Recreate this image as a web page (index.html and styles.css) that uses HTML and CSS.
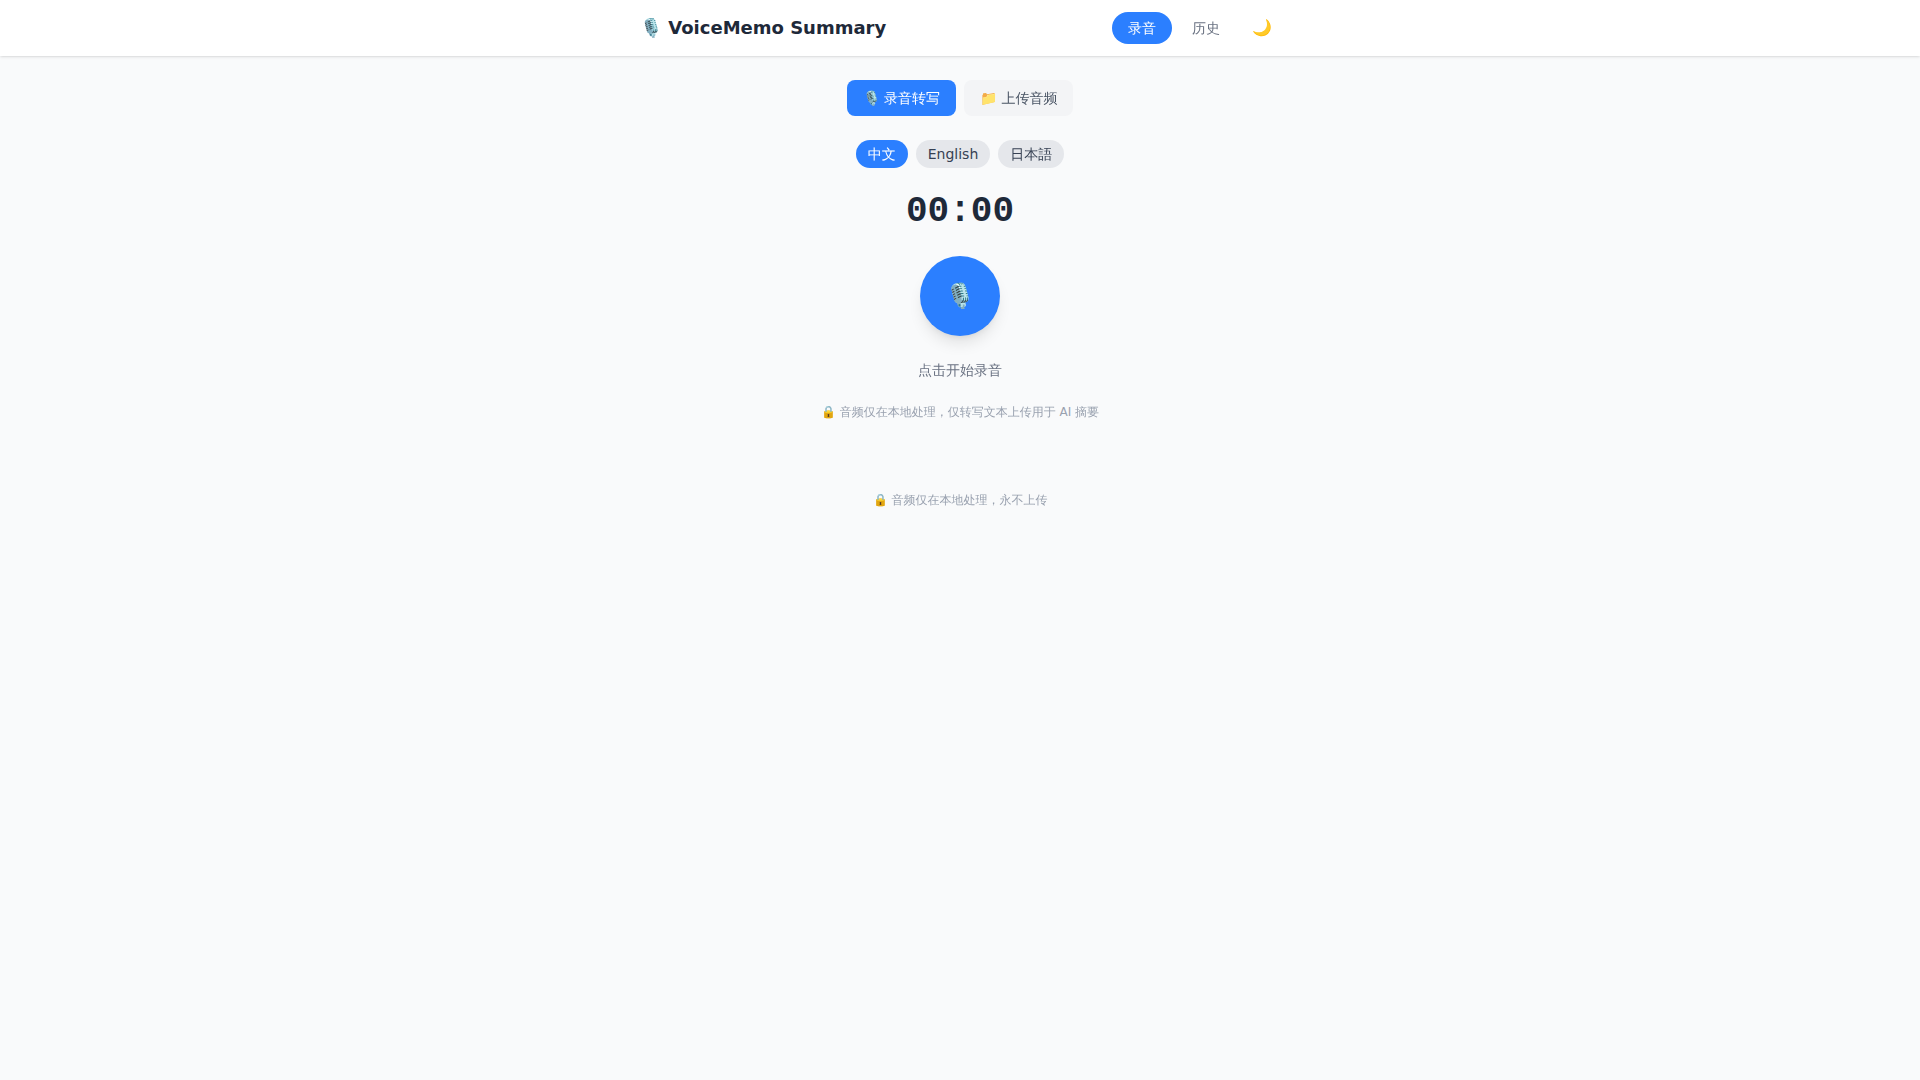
FILE: index.html
```html
<!DOCTYPE html>
<html lang="zh-CN">
<head>
	<meta charset="UTF-8">
	<meta name="viewport" content="width=device-width, initial-scale=1.0">
	<title>VoiceMemo Summary</title>

	<link rel="stylesheet" href="styles.css">
</head>
<body>
	<header class="header">
		<div class="header__inner">
			<h1 class="header__title">🎙️ VoiceMemo Summary</h1>
			<nav class="nav">
				<button class="nav__button nav__button--active" type="button">录音</button>
				<button class="nav__button" type="button">历史</button>
				<button class="nav__theme" type="button" aria-label="深色模式">🌙</button>
			</nav>
		</div>
	</header>

	<main class="main">
		<div class="modes">
			<button class="mode mode--active" type="button">🎙️ 录音转写</button>
			<button class="mode" type="button">📁 上传音频</button>
		</div>

		<section class="recorder">
			<div class="langs">
				<button class="lang lang--active" type="button">中文</button>
				<button class="lang" type="button">English</button>
				<button class="lang" type="button">日本語</button>
			</div>
			<div class="timer">00:00</div>
			<button class="record" type="button" aria-label="开始录音">🎙️</button>
			<p class="hint">点击开始录音</p>
			<p class="note">🔒 音频仅在本地处理，仅转写文本上传用于 AI 摘要</p>
		</section>
	</main>

	<footer class="footer note">🔒 音频仅在本地处理，永不上传</footer>
</body>
</html>
```

FILE: styles.css
```css
* { box-sizing: border-box }
body {
	margin: 0;
	min-height: 100vh;
	background: #f9fafb;
	color: #1e2939;
	font-family: "DejaVu Sans", "WenQuanYi Zen Hei", "Noto Sans CJK SC", sans-serif;
	font-size: 16px;
	line-height: 24px;
}
h1, p {
	margin: 0;
}
button {
	border: 0;
	font-family: inherit;
	cursor: pointer;
}
.header {
	background: #fff;
	box-shadow: 0 1px 3px rgba(0, 0, 0, .1), 0 1px 2px -1px rgba(0, 0, 0, .1);
}
.header__inner {
	display: flex;
	max-width: 672px;
	margin: 0 auto;
	padding: 12px 16px;
	justify-content: space-between;
	align-items: center;
}
.header__title {
	font-size: 18px;
	line-height: 28px;
	font-weight: 700;
}
.nav {
	display: flex;
	gap: 4px;
	align-items: center;
}
.nav__button {
	padding: 6px 16px;
	border-radius: 16px;
	background: transparent;
	color: #6a7282;
	font-size: 14px;
	line-height: 20px;
}
.nav__theme {
	margin-left: 4px;
	padding: 4px 8px;
	background: transparent;
	font-size: 16px;
	line-height: 24px;
}
.nav__button--active,
.mode.mode--active,
.lang.lang--active {
	background: #2b7fff;
	color: #fff;
}
.main {
	max-width: 672px;
	margin: 0 auto;
	padding: 24px 16px;
}
.modes {
	display: flex;
	gap: 8px;
	margin-bottom: 24px;
	justify-content: center;
}
.mode {
	padding: 8px 16px;
	border-radius: 8px;
	background: #f3f4f6;
	color: #4a5565;
	font-size: 14px;
	line-height: 20px;
}
.recorder {
	display: flex;
	gap: 24px;
	flex-direction: column;
	align-items: center;
}
.langs {
	display: flex;
	gap: 8px;
}
.lang {
	padding: 4px 12px;
	border-radius: 14px;
	background: #e5e7eb;
	color: #364153;
	font-size: 14px;
	line-height: 20px;
}
.timer {
	font-family: "Liberation Mono", monospace;
	font-size: 36px;
	line-height: 40px;
	font-weight: 700;
}
.record {
	width: 80px;
	height: 80px;
	padding: 0;
	border-radius: 50%;
	background: #2b7fff;
	box-shadow: 0 10px 15px -3px rgba(0, 0, 0, .1), 0 4px 6px -4px rgba(0, 0, 0, .1);
	color: #fff;
	font-size: 24px;
	line-height: 32px;
}
.hint {
	color: #6a7282;
	font-size: 14px;
	line-height: 20px;
}
.note {
	color: #99a1af;
	font-size: 12px;
	line-height: 16px;
	text-align: center;
}
.footer {
	padding: 48px 16px 24px;
}
```
